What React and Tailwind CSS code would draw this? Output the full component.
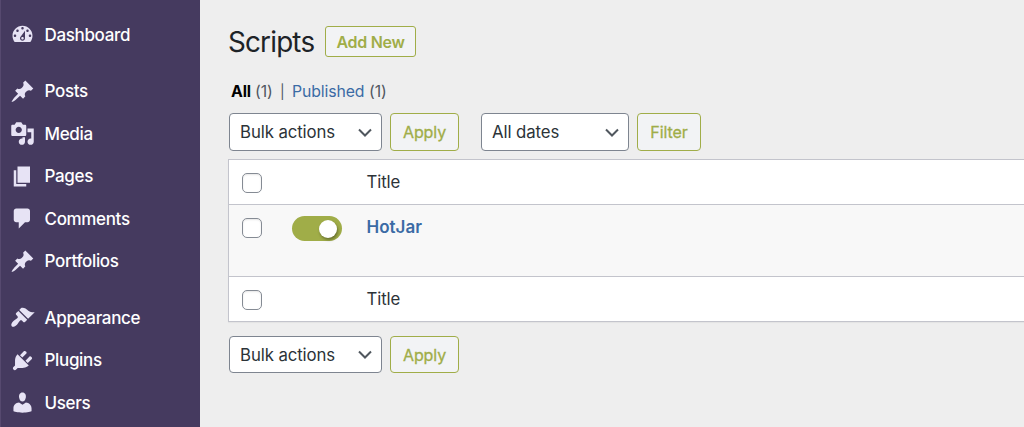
const ICONS = {
  dashboard: 'M3.76 16h12.48c1.1-1.37 1.76-3.11 1.76-5 0-4.42-3.58-8-8-8s-8 3.58-8 8c0 1.89.66 3.63 1.76 5zM10 4c.55 0 1 .45 1 1s-.45 1-1 1-1-.45-1-1 .45-1 1-1zM6 6c.55 0 1 .45 1 1s-.45 1-1 1-1-.45-1-1 .45-1 1-1zm8 0c.55 0 1 .45 1 1s-.45 1-1 1-1-.45-1-1 .45-1 1-1zm-5.37 5.55L12 7v6c0 1.1-.9 2-2 2s-2-.9-2-2c0-.57.24-1.08.63-1.45zM4 10c.55 0 1 .45 1 1s-.45 1-1 1-1-.45-1-1 .45-1 1-1zm12 0c.55 0 1 .45 1 1s-.45 1-1 1-1-.45-1-1 .45-1 1-1zm-5 3c0-.55-.45-1-1-1s-1 .45-1 1 .45 1 1 1 1-.45 1-1z',
  pin: 'M10.44 3.02l1.82-1.82 6.36 6.35-1.83 1.82c-1.05-.68-2.48-.57-3.41.36l-.75.75c-.92.93-1.04 2.35-.35 3.41l-1.83 1.82-2.41-2.41-2.8 2.79c-.42.42-3.38 2.71-3.8 2.29s1.86-3.39 2.28-3.81l2.79-2.79L4.1 9.36l1.83-1.82c1.05.69 2.48.57 3.4-.36l.75-.75c.93-.92 1.05-2.35.36-3.41z',
  media: 'M13 11V4c0-.55-.45-1-1-1h-1.67L9 1H5L3.67 3H2c-.55 0-1 .45-1 1v7c0 .55.45 1 1 1h10c.55 0 1-.45 1-1zM7 4.5c1.38 0 2.5 1.12 2.5 2.5S8.38 9.5 7 9.5 4.5 8.38 4.5 7 5.62 4.5 7 4.5zM14 6h5v10.5c0 1.38-1.12 2.5-2.5 2.5S14 17.88 14 16.5s1.12-2.5 2.5-2.5c.17 0 .34.02.5.05V9h-3V6zm-4 8.05V13h2v3.5c0 1.38-1.12 2.5-2.5 2.5S7 17.88 7 16.5 8.12 14 9.5 14c.17 0 .34.02.5.05z',
  pages: 'M6 15V2h10v13H6zm-1 1h8v2H3V5h2v11z',
  comments: 'M5 2h9c1.1 0 2 .9 2 2v7c0 1.1-.9 2-2 2h-2l-5 5v-5H5c-1.1 0-2-.9-2-2V4c0-1.1.9-2 2-2z',
  appearance: 'M14.48 11.06L7.41 3.99l1.5-1.5c.5-.56 2.3-.47 3.51.32 1.21.8 1.43 1.28 2.91 2.1 1.18.64 2.45 1.26 4.45.85zm-.71.71L6.7 4.7 4.93 6.47c-.39.39-.39 1.02 0 1.41l1.06 1.06c.39.39.39 1.03 0 1.42-.6.6-1.43 1.11-2.21 1.69-.35.26-.7.53-1.01.84C1.43 14.23.4 16.08 1.4 17.07c.99 1 2.84-.03 4.18-1.36.31-.31.58-.66.85-1.02.57-.78 1.08-1.61 1.69-2.21.39-.39 1.02-.39 1.41 0l1.06 1.06c.39.39 1.02.39 1.41 0z',
  plugins: 'M13.11 4.36L9.87 7.6 8 5.73l3.24-3.24c.35-.34 1.05-.2 1.56.32.52.51.66 1.21.31 1.55zm-8 1.77l.91-1.12 9.01 9.01-1.19.84c-.71.71-2.63 1.16-3.82 1.16H6.14L4.9 17.26c-.59.59-1.54.59-2.12 0-.59-.58-.59-1.53 0-2.12l1.24-1.24v-3.88c0-1.13.4-3.19 1.09-3.89zm7.26 3.97l3.24-3.24c.34-.35 1.04-.21 1.55.31.52.51.66 1.21.31 1.55l-3.24 3.25z',
  users: 'M10 9.25c-2.27 0-2.73-3.44-2.73-3.44C7 4.02 7.82 2 9.97 2c2.16 0 2.98 2.02 2.71 3.81 0 0-.41 3.44-2.68 3.44zm0 2.57L12.72 10c2.39 0 4.52 2.33 4.52 4.53v2.49s-3.65 1.13-7.24 1.13c-3.65 0-7.24-1.13-7.24-1.13v-2.49c0-2.25 1.94-4.48 4.47-4.48z',
};

const MENU = [
  [['Dashboard', 'dashboard']],
  [
    ['Posts', 'pin'],
    ['Media', 'media'],
    ['Pages', 'pages'],
    ['Comments', 'comments'],
    ['Portfolios', 'pin'],
  ],
  [
    ['Appearance', 'appearance'],
    ['Plugins', 'plugins'],
    ['Users', 'users'],
  ],
];

function Sidebar() {
  return (
    <nav className="flex w-[200px] shrink-0 flex-col gap-[14px] border-l border-[#56496f] bg-[#453a5f] pt-[13.5px]">
      {MENU.map((group, i) => (
        <ul key={i}>
          {group.map(([label, icon]) => (
            <li key={label} className="flex h-[42.5px] items-center pl-[9px]">
              <svg viewBox="0 0 20 20" className="size-[25px] shrink-0 fill-[#e7e3f5]">
                <path d={ICONS[icon]} />
              </svg>
              <span className="ml-[9.5px] text-[17px] font-medium tracking-[-0.34px] text-white">{label}</span>
            </li>
          ))}
        </ul>
      ))}
    </nav>
  );
}

function Select({ label, size }) {
  return (
    <button className={`flex items-center justify-between rounded-[4px] border border-[#7e8590] bg-white pr-[9px] pl-[10px] ${size}`}>
      <span>{label}</span>
      <svg viewBox="0 0 14 9" className="h-[9px] w-[14px] fill-none stroke-[#50575e] stroke-2">
        <path d="M1 1.5l6 6 6-6" />
      </svg>
    </button>
  );
}

function Button({ label, size }) {
  return (
    <button className={`rounded-[4px] border border-[#a0ad48] bg-[#f2f3f5] text-[16px] tracking-[-0.1px] text-[#a0ad48] [-webkit-text-stroke:0.3px] ${size}`}>
      {label}
    </button>
  );
}

function Checkbox() {
  return <span className="ml-[13px] block size-[20px] rounded-[5px] border border-[#858b94] bg-white shadow-[inset_0_1px_2px_rgba(0,0,0,0.1)]" />;
}

function TitleRow() {
  return (
    <div className="flex h-[44px] items-start">
      <div className="pt-[13px]">
        <Checkbox />
      </div>
      <span className="mt-[10px] ml-[104.5px]">Title</span>
    </div>
  );
}

export default function App() {
  return (
    <div className="flex h-[427px] w-[1024px] overflow-hidden bg-[#eeeeee] font-['Inter',sans-serif] text-[16.8px] leading-[24px] tracking-[-0.1px] text-[#2c3338]">
      <Sidebar />
      <main className="min-w-0 flex-1 pl-[28px]">
        <div className="flex items-start pt-[26px]">
          <h1 className="mt-px w-[97px] text-[27.8px] leading-[31px] tracking-[-0.8px] text-[#1d2327]">Scripts</h1>
          <button className="h-[31px] w-[91px] rounded-[3px] border border-[#a0ad48] bg-[#f2f3f5] text-[16px] font-semibold tracking-[-0.3px] text-[#a0ad48]">
            Add New
          </button>
        </div>
        <div className="mt-[22px] flex pl-[3px] text-[15.8px] text-[#50575e]">
          <b className="w-[24px] font-bold text-black">All</b>
          <span className="w-[25px]">(1)</span>
          <span className="w-[12px] text-[14px]">|</span>
          <span className="w-[77px] text-[#3b6ba5]">Published</span>
          <span>(1)</span>
        </div>
        <div className="mt-[9px] flex pl-px">
          <Select label="Bulk actions" size="h-[38px] w-[153px]" />
          <Button label="Apply" size="ml-[8px] h-[38px] w-[69px]" />
          <Select label="All dates" size="ml-[22px] h-[38px] w-[148px]" />
          <Button label="Filter" size="ml-[8px] h-[38px] w-[64px]" />
        </div>
        <div className="mt-[8px] border border-r-0 border-[#c3c4cc] bg-white shadow-[0_1px_1px_rgba(0,0,0,0.04)]">
          <TitleRow />
          <div className="flex h-[73px] items-start border-y border-[#c3c4cc] bg-[#f8f8f8]">
            <div className="mt-[13px]">
              <Checkbox />
            </div>
            <div className="mt-[11px] ml-[30px] flex h-[25px] w-[50px] items-center justify-end rounded-full bg-[#a0ad48] pr-[5px]">
              <span className="size-[18px] rounded-full bg-white shadow-[1px_2px_3px_rgba(0,0,0,0.35)]" />
            </div>
            <span className="mt-[10px] ml-[24.5px] text-[17px] font-semibold tracking-normal text-[#3b6ba5]">HotJar</span>
          </div>
          <TitleRow />
        </div>
        <div className="mt-[14px] flex pl-px">
          <Select label="Bulk actions" size="h-[37px] w-[153px]" />
          <Button label="Apply" size="ml-[8px] h-[37px] w-[69px]" />
        </div>
      </main>
    </div>
  );
}
